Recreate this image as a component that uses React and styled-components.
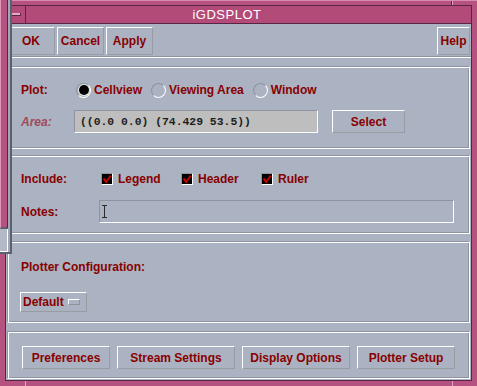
import styled, { createGlobalStyle } from "styled-components"

const PINK = "#b6527f"
const TITLE = "#b34b79"
const DARK = "#5a2446"
const PANEL = "#abb2c1"
const SHADE = "#8d939f"
const RED = "#880000"

const Global = createGlobalStyle`
  html, body { margin: 0; padding: 0; background: ${PINK}; }
  body { font-family: "Liberation Sans", Arial, sans-serif; }
  * { box-sizing: border-box; }
`

function Radio({ checked, children }) {
  return (
    <RadioItem>
      <RadioMark>{checked && <Dot />}</RadioMark>
      {children}
    </RadioItem>
  )
}

function Check({ children }) {
  return (
    <CheckItem>
      <CheckBox>
        <svg width="10" height="10" viewBox="0 0 10 10">
          <path d="M1.5 4.5 L4.2 8 L8.8 1.5" fill="none" stroke="#c40000" strokeWidth="2" />
        </svg>
      </CheckBox>
      {children}
    </CheckItem>
  )
}

export default function App() {
  return (
    <>
      <Global />
      <Frame>
        <TopEdge>
          <Tick x={451} />
          <Tick light />
        </TopEdge>

        <Middle>
          <SideEdge />
          <Window>
            <TitleBar>
              <MenuButton>
                <MenuBar />
              </MenuButton>
              <Title>iGDSPLOT</Title>
            </TitleBar>

            <Panel>
              <Toolbar>
                <Button w={48} h={28}>OK</Button>
                <Button w={47} h={28}>Cancel</Button>
                <Button w={47} h={28}>Apply</Button>
                <Spacer />
                <Button w={33} h={28}>Help</Button>
              </Toolbar>
              <Separator />

              <Body>
                <Group h={83} pad="13px 13px 0">
                  <Row h={20}>
                    <Label w={53}>Plot:</Label>
                    <RadioGroup>
                      <Radio checked>Cellview</Radio>
                      <Radio>Viewing Area</Radio>
                      <Radio>Window</Radio>
                    </RadioGroup>
                  </Row>
                  <Row h={23} mt={10}>
                    <Label w={53} disabled>Area:</Label>
                    <Field w={244} fill="#bebebe">((0.0 0.0) (74.429 53.5))</Field>
                    <Button w={73} h={23} ml={14}>Select</Button>
                  </Row>
                </Group>

                <Group h={79} mt={6} pad="16px 13px 0">
                  <Row h={14}>
                    <Label w={78}>Include:</Label>
                    <CheckGroup>
                      <Check>Legend</Check>
                      <Check>Header</Check>
                      <Check>Ruler</Check>
                    </CheckGroup>
                  </Row>
                  <Row h={23} mt={14}>
                    <Label w={78}>Notes:</Label>
                    <Field w={355}>
                      <svg width="5" height="13" viewBox="0 0 5 13">
                        <path d="M0 0.5 H5 M2.5 0.5 V12.5 M0 12.5 H5" stroke="#2a2a2a" strokeWidth="1" fill="none" />
                      </svg>
                    </Field>
                  </Row>
                </Group>

                <Group h={82} mt={7} pad="18px 13px 0">
                  <Row h={14}>
                    <Label>Plotter Configuration:</Label>
                  </Row>
                  <Row h={20} mt={18}>
                    <OptionMenu>
                      Default
                      <OptionMark />
                    </OptionMenu>
                  </Row>
                </Group>

                <Group h={48} mt={8} pad="14px 14px 0">
                  <ButtonRow>
                    <Button w={88} h={23}>Preferences</Button>
                    <Button w={118} h={23}>Stream Settings</Button>
                    <Button w={108} h={23}>Display Options</Button>
                    <Button w={98} h={23}>Plotter Setup</Button>
                  </ButtonRow>
                </Group>
              </Body>
            </Panel>
          </Window>
          <SideEdge />
        </Middle>

        <BottomEdge>
          <Tick x={25} light />
          <Tick x={426} light />
        </BottomEdge>

        <OtherWindow>
          <OtherFrame>
            <OtherPink />
            <OtherCorner />
          </OtherFrame>
          <OtherSash />
        </OtherWindow>
      </Frame>
    </>
  )
}

const Frame = styled.div`
  position: relative;
  width: 477px;
  height: 386px;
  display: flex;
  flex-direction: column;
  background: ${PINK};
  overflow: hidden;
`

const TopEdge = styled.div`
  height: 5px;
  flex-shrink: 0;
  display: flex;
  border-top: 1px solid #d88dae;
`

const BottomEdge = styled.div`
  height: 5px;
  flex-shrink: 0;
  display: flex;
`

const Tick = styled.div`
  width: 1px;
  margin-left: ${(p) => p.x || 0}px;
  background: ${(p) => (p.light ? "#e2a6c0" : DARK)};
`

const Middle = styled.div`
  flex: 1;
  display: flex;
  min-height: 0;
`

const SideEdge = styled.div`
  width: 5px;
  flex-shrink: 0;
`

const Window = styled.div`
  flex: 1;
  display: flex;
  flex-direction: column;
  border: 1px solid ${DARK};
`

const TitleBar = styled.div`
  height: 18px;
  flex-shrink: 0;
  display: flex;
  background: ${TITLE};
  border-bottom: 1px solid ${DARK};
`

const MenuButton = styled.div`
  width: 20px;
  display: flex;
  align-items: center;
  justify-content: center;
  border-right: 1px solid ${DARK};
`

const MenuBar = styled.div`
  width: 11px;
  height: 3px;
  background: #e4a9c3;
  border-bottom: 1px solid ${DARK};
  border-right: 1px solid ${DARK};
`

const Title = styled.div`
  flex: 1;
  padding-right: 43px;
  text-align: center;
  color: #fff;
  font-size: 13px;
  letter-spacing: 0.5px;
  line-height: 17px;
`

const Panel = styled.div`
  flex: 1;
  display: flex;
  flex-direction: column;
  background: ${PANEL};
`

const Toolbar = styled.div`
  display: flex;
  gap: 2px;
  padding: 3px 1px 1px 1px;
  border-bottom: 1px solid ${SHADE};
`

const Separator = styled.div`
  height: 1px;
  background: #fff;
`

const Spacer = styled.div`
  flex: 1;
`

const Button = styled.button`
  width: ${(p) => p.w}px;
  height: ${(p) => p.h}px;
  margin: 0 0 0 ${(p) => p.ml || 0}px;
  padding: 0;
  flex-shrink: 0;
  background: ${PANEL};
  border: 1px solid;
  border-color: #fff #999ca3 #999ca3 #fff;
  font: bold 12px "Liberation Sans", Arial, sans-serif;
  color: ${RED};
`

const Body = styled.div`
  display: flex;
  flex-direction: column;
  padding: 8px 1px 0 1px;
`

const Group = styled.div`
  height: ${(p) => p.h}px;
  margin-top: ${(p) => p.mt || 0}px;
  padding: ${(p) => p.pad};
  display: flex;
  flex-direction: column;
  border: 1px solid;
  border-color: ${SHADE} #fff #fff ${SHADE};
  box-shadow: inset 1px 1px 0 #fff, inset -1px -1px 0 ${SHADE};
`

const Row = styled.div`
  display: flex;
  align-items: center;
  height: ${(p) => p.h}px;
  margin-top: ${(p) => p.mt || 0}px;
`

const Label = styled.div`
  width: ${(p) => (p.w ? `${p.w}px` : "auto")};
  flex-shrink: 0;
  font-size: 12px;
  font-weight: bold;
  color: ${(p) => (p.disabled ? "#a03848" : RED)};
  font-style: ${(p) => (p.disabled ? "italic" : "normal")};
  opacity: ${(p) => (p.disabled ? 0.85 : 1)};
`

const RadioGroup = styled.div`
  display: flex;
  align-items: center;
  padding-left: 2px;
`

const RadioItem = styled.div`
  display: flex;
  align-items: center;
  gap: 3px;
  margin-right: 9px;
  font-size: 12px;
  font-weight: bold;
  color: ${RED};
`

const RadioMark = styled.div`
  width: 15px;
  height: 15px;
  border-radius: 50%;
  border: 1px solid;
  border-color: ${SHADE} #fff #fff ${SHADE};
  display: flex;
  align-items: center;
  justify-content: center;
`

const Dot = styled.div`
  width: 10px;
  height: 10px;
  border-radius: 50%;
  background: #000;
  box-shadow: 0 0 0 1px #e8e8e8;
`

const Field = styled.div`
  width: ${(p) => p.w}px;
  height: 23px;
  flex-shrink: 0;
  display: flex;
  align-items: center;
  padding-left: ${(p) => (p.fill ? 5 : 2)}px;
  background: ${(p) => p.fill || "transparent"};
  border: 1px solid;
  border-color: ${SHADE} #fff #fff ${SHADE};
  font: bold 11.4px "Liberation Mono", "Courier New", monospace;
  color: #1e1e1e;
  white-space: pre;
`

const CheckGroup = styled.div`
  display: flex;
  padding-left: 2px;
`

const CheckItem = styled.div`
  width: 80px;
  display: flex;
  align-items: center;
  gap: 5px;
  font-size: 12px;
  font-weight: bold;
  color: ${RED};
`

const CheckBox = styled.div`
  width: 12px;
  height: 12px;
  flex-shrink: 0;
  display: flex;
  align-items: center;
  justify-content: center;
  background: #000;
  border: 1px solid;
  border-color: ${SHADE} #fff #fff ${SHADE};
`

const OptionMenu = styled.div`
  width: 67px;
  height: 20px;
  margin-left: -1px;
  display: flex;
  align-items: center;
  gap: 4px;
  padding-left: 2px;
  border: 1px solid;
  border-color: #fff #999ca3 #999ca3 #fff;
  font-size: 12px;
  font-weight: bold;
  color: ${RED};
`

const OptionMark = styled.div`
  width: 12px;
  height: 6px;
  border: 1px solid;
  border-color: #fff ${SHADE} ${SHADE} #fff;
`

const ButtonRow = styled.div`
  display: flex;
  gap: 7px;
`

const OtherWindow = styled.div`
  position: absolute;
  left: 0;
  top: 0;
  width: 12px;
  height: 254px;
  display: flex;
  border-bottom: 2px solid #5b6170;
`

const OtherFrame = styled.div`
  width: 8px;
  display: flex;
  flex-direction: column;
`

const OtherPink = styled.div`
  flex: 1;
  background: ${PINK};
  border-left: 1px solid #dc98b6;
  border-right: 1px solid ${DARK};
  border-bottom: 2px solid #5b6170;
`

const OtherCorner = styled.div`
  height: 23px;
  background: #b3b9c6;
  border-right: 1px solid #fff;
  border-bottom: 1px solid #fff;
`

const OtherSash = styled.div`
  width: 4px;
  background: #a1a7b4;
  border-right: 2px solid #5b6170;
`
